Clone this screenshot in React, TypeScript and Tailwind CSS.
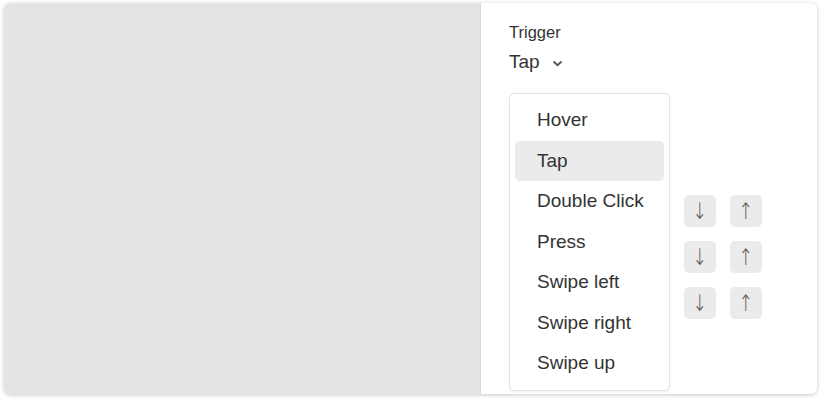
import React from "react";

const options = ["Hover", "Tap", "Double Click", "Press", "Swipe left", "Swipe right", "Swipe up"];

function ArrowButton({ glyph }: { glyph: string }) {
	return (
		<button className="w-8 h-8 rounded-[5px] bg-[#ebebeb] flex items-center justify-center">
			<span className="inline-block scale-x-[0.75] text-[#5a5550] text-[23px] leading-none font-['DejaVu_Sans',sans-serif] font-light">
				{glyph}
			</span>
		</button>
	);
}

export default function App() {
	const selected = "Tap";

	return (
		<div className="w-[822px] h-[401px] bg-white pt-[3px] pl-[4px] font-['Liberation_Sans',Arial,sans-serif]">
			<div className="w-[813px] h-[391px] flex rounded-[6px] bg-white shadow-[0_1px_4px_rgba(0,0,0,0.22)] overflow-hidden">
				{/* Preview area */}
				<div className="w-[477px] bg-[#e4e4e4] border-r border-[#d9d9d9]" />

				{/* Settings panel */}
				<div className="relative flex-1 pl-[28px] pt-[19px]">
					<p className="text-[16.5px] leading-[20px] text-[#333]">Trigger</p>
					<button className="mt-[8px] flex items-center gap-[12px] text-[19px] leading-[24px] text-[#333]">
						Tap
						<svg width="11" height="7" viewBox="0 0 11 7" className="mt-[2px]">
							<path d="M1.5 1.5 L5.5 5.2 L9.5 1.5" fill="none" stroke="#555" strokeWidth="1.9" />
						</svg>
					</button>

					{/* Order controls (partly behind the menu) */}
					<div className="mt-[121px] flex flex-col gap-[14px] pl-[175px]">
						{[0, 1, 2].map((i) => (
							<div key={i} className="flex gap-[14px]">
								<ArrowButton glyph="↓" />
								<ArrowButton glyph="↑" />
							</div>
						))}
					</div>

					{/* Dropdown menu */}
					<div className="absolute left-[28px] top-[90px] w-[161px] py-[6px] bg-white border border-[#e2e2e2] rounded-[5px] shadow-[0_1px_3px_rgba(0,0,0,0.06)]">
						{options.map((opt) => (
							<div
								key={opt}
								className={`mx-[5px] h-[40.5px] flex items-center pl-[22px] rounded-[5px] text-[19px] text-[#333] ${
									opt === selected ? "bg-[#ebebeb]" : ""
								}`}
							>
								{opt}
							</div>
						))}
					</div>
				</div>
			</div>
		</div>
	);
}
